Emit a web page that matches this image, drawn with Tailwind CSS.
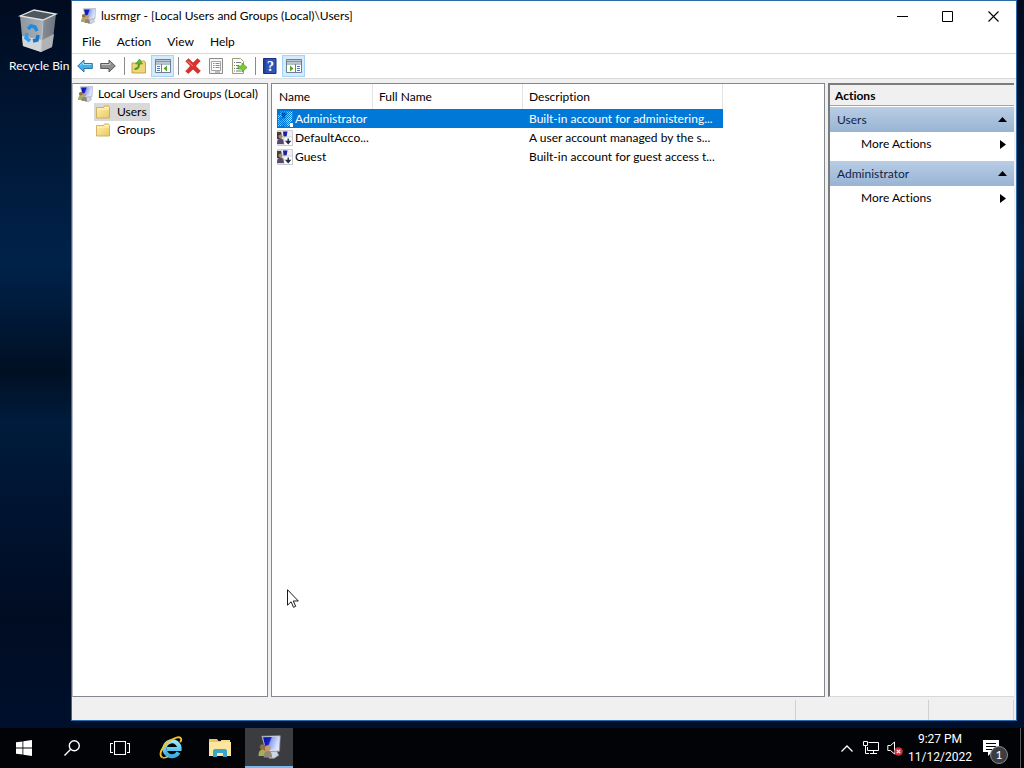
<!DOCTYPE html>
<html lang="en">
<head>
  <meta charset="UTF-8">
  <meta name="viewport" content="width=device-width, initial-scale=1.0">
  <title>lusrmgr - [Local Users and Groups (Local)\Users]</title>
  <script src="https://cdn.jsdelivr.net/npm/@tailwindcss/browser@4"></script>
</head>
<body class="h-screen flex flex-col overflow-hidden bg-[#00112b] font-['Lato','Noto_Sans',sans-serif] [font-variant-ligatures:none] text-xs text-black">

  <!-- shared icons -->
  <svg class="absolute size-0">
    <defs>
      <linearGradient id="folderFill" x1="0" y1="0" x2="1" y2="1">
        <stop offset="0" stop-color="#fdf0b4"/><stop offset="1" stop-color="#edc95f"/>
      </linearGradient>
      <linearGradient id="binFill" x1="0" y1="0" x2="1" y2="0">
        <stop offset="0" stop-color="#8f969e"/><stop offset=".6" stop-color="#aab0b6"/><stop offset=".62" stop-color="#868d96"/><stop offset="1" stop-color="#6d747e"/>
      </linearGradient>
      <linearGradient id="ieFill" x1="0" y1="0" x2="0" y2="1">
        <stop offset="0" stop-color="#9be8fb"/><stop offset="1" stop-color="#34aee6"/>
      </linearGradient>
      <linearGradient id="screen" x1="0" y1="0" x2="1" y2=".3">
        <stop offset="0" stop-color="#0a129c"/><stop offset=".45" stop-color="#1420c4"/><stop offset=".55" stop-color="#8fa3ee"/><stop offset="1" stop-color="#dbe4fd"/>
      </linearGradient>
      <symbol id="mmc" viewBox="0 0 16 16">
        <path d="m8 11 5-.5 1.500 3-3 2H8z" fill="#cfd5e2" stroke="#8b93a8" stroke-width=".5"/>
        <path d="M3.200.8 15.500.5 15 10.800 6 11z" fill="#dfe3ee" stroke="#8a91a8" stroke-width=".5"/>
        <path d="M4 1.500 14.700 1.200 14.200 9.500 6 9.800z" fill="url(#screen)"/>
        <circle cx="3.800" cy="8" r="1.900" fill="#8d7140"/>
        <path d="M1 14c0-3 1-4.400 2.800-4.400S6.600 11 6.600 14z" fill="#a9ad58"/>
        <circle cx="7.200" cy="8.800" r="1.900" fill="#c79873"/>
        <path d="M4.500 15c0-3 1-4.300 2.800-4.300S10 12 10 15z" fill="#8e8a76"/>
      </symbol>
      <symbol id="folder" viewBox="0 0 16 16">
        <path d="M1.500 3.500h7l1-1.500h4l1 1.500v10.500h-13z" fill="url(#folderFill)" stroke="#c9a24a" stroke-width=".8"/>
        <path d="M9.500 3.500h4.500" stroke="#fffbe2"/>
        <path d="M2 5.200h12" stroke="#fff7cf" stroke-width=".8"/>
      </symbol>
      <symbol id="userOff" viewBox="0 0 16 16">
        <path d="M.5.500h15v15H.5z" fill="#dcdde2" stroke="#b9bac2" stroke-width=".6"/>
        <path d="M5 1h10v8H6z" fill="#eef0f6"/>
        <path d="M6 1.500h4.500L9.500 6.500H6.500z" fill="#1b1fa0"/>
        <path d="M0 2h4l1 4-2 3H0z" fill="#4a3b38"/>
        <circle cx="3.500" cy="6.500" r="2" fill="#a98a62"/>
        <path d="M0 14c0-4 1.500-5.500 3.500-5.500S7 10 7 14z" fill="#57496e"/>
        <path d="M7 7h8.500v8.500H7z" fill="#fff" stroke="#b4b6be" stroke-width=".6"/>
        <path d="M11.200 8.500v4M9.500 11.500l1.700 2 1.700-2z" fill="#222b3e" stroke="#222b3e" stroke-width="1.400"/>
      </symbol>
    </defs>
  </svg>

  <main class="flex flex-1 min-h-0 pr-[7px] pb-[7px] bg-[linear-gradient(180deg,#000b20_0%,#001531_15%,#00224a_36%,#001024_51%,#001c3c_58%,#001533_68%,#000c22_85%,#00102c_100%)]">
    <div class="w-[71px] shrink-0 pt-2">
      <button class="block pl-[9px] text-white text-left whitespace-nowrap">
        <svg class="ml-[9px] w-[42px] h-[48px]" viewBox="0 0 42 48">
          <path d="M2 8 16 2l22 4-4 33-11 5-18-6z" fill="url(#binFill)"/>
          <path d="M2 8 16 2l22 4-13 6z" fill="#50565e" stroke="#dfe3e6" stroke-width="1.300"/>
          <path d="m5 38-1-10 20 4-1 12z" fill="#d3d6d8"/>
          <path d="m23 44 1-12 12-6-2 13z" fill="#b0b3b6"/>
          <path d="M25 12 23 44" stroke="#c3c8cc"/>
          <path d="m10 21 3-3 4 1 2 4" fill="none" stroke="#1e8be0" stroke-width="3.500"/>
          <path d="m9 25-1 5 4 3" fill="none" stroke="#2f9cf0" stroke-width="3.500"/>
          <path d="m15 33 4-1 1-5" fill="none" stroke="#1477cc" stroke-width="3.500"/>
        </svg>
        <span class="block leading-5">Recycle Bin</span>
      </button>
    </div>

    <section class="flex flex-col flex-1 min-w-0 bg-[#f0f0f0] border border-[#2b6cab]">
      <!-- title bar -->
      <header class="flex items-center h-[30px] bg-white pl-2">
        <svg class="w-4 h-4 mr-[5px]"><use href="#mmc"/></svg>
        <h1 class="flex-1 truncate">lusrmgr - [Local Users and Groups (Local)\Users]</h1>
        <button aria-label="Minimize" class="w-[46px] h-full grid place-items-center">
          <svg class="w-[11px] h-[11px]" viewBox="0 0 11 11"><path d="M0 5.500h11" stroke="#000"/></svg>
        </button>
        <button aria-label="Maximize" class="w-[45px] h-full grid place-items-center">
          <svg class="w-[11px] h-[11px]" viewBox="0 0 11 11"><path d="M.5.5h10v10H.5z" fill="none" stroke="#000"/></svg>
        </button>
        <button aria-label="Close" class="w-[46px] h-full grid place-items-center">
          <svg class="w-[11px] h-[11px]" viewBox="0 0 11 11"><path d="m.5.5 10 10m0-10-10 10" stroke="#000" stroke-width="1.100"/></svg>
        </button>
      </header>

      <nav class="flex items-center h-[22px] bg-white pl-[2px]">
        <button class="px-2">File</button>
        <button class="px-2">Action</button>
        <button class="px-2">View</button>
        <button class="px-2">Help</button>
      </nav>

      <!-- toolbar -->
      <div class="flex items-center h-[26px] bg-white border-y border-[#dadada] pl-[2px]">
        <button aria-label="Back" class="w-[23px] pl-[3px]">
          <svg class="w-4 h-4" viewBox="0 0 16 16"><path d="M.7 8 7 2v3.500h8.300v5H7V14z" fill="#3fb2ec" stroke="#22699e" stroke-width=".9"/><path d="M3 7.500 6.300 4.500V6.500h8" fill="none" stroke="#a4e0fb"/></svg>
        </button>
        <button aria-label="Forward" class="w-[23px] pl-[3px]">
          <svg class="w-4 h-4" viewBox="0 0 16 16"><path d="M15.300 8 9 2v3.500H.7v5H9V14z" fill="#8f8f8f" stroke="#4e4e4e" stroke-width=".9"/><path d="M1.500 6.500H10V4.500" fill="none" stroke="#c9c9c9"/></svg>
        </button>
        <span class="w-2 flex justify-center"><i class="w-px h-[18px] bg-[#8a8a8a]"></i></span>
        <button aria-label="Up one level" class="w-[23px] pl-[3px]">
          <svg class="w-4 h-4" viewBox="0 0 16 16"><path d="M1 5h7l1-2h4.500l1 2v10H1z" fill="#f0d678" stroke="#b99a45" stroke-width=".9"/><path d="M3.500 11c3 0 4.500-2 4.500-5" fill="none" stroke="#43a01f" stroke-width="2"/><path d="M4.500 6 8.500 1l3 5z" fill="#5bbb2d" stroke="#3c8c1d" stroke-width=".6"/></svg>
        </button>
        <button aria-label="Show/Hide Console Tree" aria-pressed="true" class="w-[23px] h-[22px] grid place-items-center bg-[#d5ebfb] border border-[#a5d3f5]">
          <svg class="w-4 h-4" viewBox="0 0 16 16"><path d="M.5 1.500h15v13H.5z" fill="#fff" stroke="#6d7f94"/><path d="M1 3.500h14" stroke="#7e93ad" stroke-width="2"/><path d="M1 6h14M6.500 6v8.500" stroke="#6d7f94"/><path d="M2 8.500h3M2 10.500h3M2 12.500h3" stroke="#4f79b0"/><path d="m8.500 10.500 3.500-3v6z" fill="#52a52a"/></svg>
        </button>
        <span class="w-2 flex justify-center"><i class="w-px h-[18px] bg-[#8a8a8a]"></i></span>
        <button aria-label="Delete" class="w-[23px] pl-[3px]">
          <svg class="w-4 h-4" viewBox="0 0 16 16"><path d="m.8 3.200 2.700-2.500L8 5l4.500-4.300 2.700 2.200L10.500 8l4.900 5-2.600 2.500L8 11l-4.700 4.500-2.600-2.300L5.500 8z" fill="#e0302c" stroke="#a81b1b" stroke-width=".6"/><path d="M2.500 3 8 8" stroke="#f58f86"/></svg>
        </button>
        <button aria-label="Properties" class="w-[23px] pl-[3px]">
          <svg class="w-4 h-4" viewBox="0 0 16 16"><path d="M1.500.5h13v15h-13z" fill="#f4f4f4" stroke="#8b8b8b"/><path d="M3.500 3.500h9v9h-9z" fill="#fff" stroke="#a5a5a5"/><path d="M5 5.500h1.500M7.500 5.500h4M5 7.500h1.500M7.500 7.500h4M5 9.500h1.500M7.500 9.500h4M7 14h5" stroke="#7e8aa0"/></svg>
        </button>
        <button aria-label="Export List" class="w-[23px] pl-[3px]">
          <svg class="w-4 h-4" viewBox="0 0 16 16"><path d="M1.500.5h8l3 3v12h-11z" fill="#fffdf0" stroke="#a49a7c"/><path d="M3 4.500h1M5 4.500h5M3 7.500h1M5 7.500h3M3 10.500h1M5 10.500h3M3 13h1M5 13h5" stroke="#6f7b8e"/><path d="M7 8h4V5l5 4.500-5 4.500v-3H7z" fill="#7ccc3c" stroke="#4d9420" stroke-width=".7"/></svg>
        </button>
        <span class="w-2 flex justify-center"><i class="w-px h-[18px] bg-[#8a8a8a]"></i></span>
        <button aria-label="Help" class="w-[23px] pl-[3px]">
          <svg class="w-4 h-4" viewBox="0 0 16 16"><path d="M1.500.5h12.500v15H1.500z" fill="#2f55b8" stroke="#1d2f78"/><path d="M3 1v14" stroke="#1d2f78"/><text x="8.500" y="13" font-size="14" font-weight="700" text-anchor="middle" fill="#fff" font-family="Liberation Serif, serif">?</text></svg>
        </button>
        <button aria-label="Show/Hide Action Pane" aria-pressed="true" class="w-[23px] h-[22px] grid place-items-center bg-[#d5ebfb] border border-[#a5d3f5]">
          <svg class="w-4 h-4" viewBox="0 0 16 16"><path d="M.5 1.500h15v13H.5z" fill="#fff" stroke="#6d7f94"/><path d="M1 3.500h14" stroke="#7e93ad" stroke-width="2"/><path d="M1 6h14M9.500 6v8.500" stroke="#6d7f94"/><path d="M11 8.500h3M11 10.500h3M11 12.500h3" stroke="#4f79b0"/><path d="m7.500 10.500-3.500-3v6z" fill="#52a52a"/></svg>
        </button>
      </div>

      <div class="flex flex-1 min-h-0 pt-1 pr-[2px]">
        <!-- console tree -->
        <ul class="w-[196px] shrink-0 bg-white border border-[#828790] border-l-[#b8bcc4] pt-[1px] leading-[18px] whitespace-nowrap">
          <li>
            <div class="flex items-center h-[18px] pl-1"><svg class="w-4 h-4 mr-[3px] shrink-0"><use href="#mmc"/></svg><span class="px-[2px]">Local Users and Groups (Local)</span></div>
            <ul class="pl-[21px]">
              <li class="flex"><button class="flex items-center h-[18px] pl-[1px] pr-px bg-[#d9d9d9]"><svg class="w-4 h-4 mr-1 shrink-0"><use href="#folder"/></svg><span class="px-[2px]">Users</span></button></li>
              <li class="flex"><button class="flex items-center h-[18px] pl-[1px] pr-px"><svg class="w-4 h-4 mr-1 shrink-0"><use href="#folder"/></svg><span class="px-[2px]">Groups</span></button></li>
            </ul>
          </li>
        </ul>

        <!-- user list -->
        <div class="flex-1 min-w-0 ml-[3px] bg-white border border-[#828790]">
          <table class="table-fixed w-[451px] border-separate border-spacing-0 text-left">
            <colgroup><col class="w-[101px]"><col class="w-[150px]"><col class="w-[200px]"></colgroup>
            <thead>
              <tr class="h-[25px]">
                <th class="font-normal p-0 pl-[7px] border-r border-[#e5e5e5]">Name</th>
                <th class="font-normal p-0 pl-[6px] border-r border-[#e5e5e5]">Full Name</th>
                <th class="font-normal p-0 pl-[6px] border-r border-[#e5e5e5]">Description</th>
              </tr>
            </thead>
            <tbody class="leading-[19px]">
              <tr class="text-white">
                <td class="p-0 pl-[5px]"><div class="flex items-center h-[19px] bg-[#0078d7]">
                  <svg class="w-4 h-4 mr-[2px] shrink-0" viewBox="0 0 16 16">
                    <defs><pattern id="dither" width="2" height="2" patternUnits="userSpaceOnUse"><path d="M0 0h1v1H0zM1 1h1v1H1z" fill="#0078d7"/></pattern></defs>
                    <path d="M3 1h12v10h-2v4H1V4h2z" fill="#b9c9e6"/><use href="#mmc"/><path d="M0 0h16v16H0z" fill="url(#dither)"/><path d="M13 12h3v4h-3z" fill="#fff"/>
                  </svg><span class="whitespace-nowrap">Administrator</span></div></td>
                <td class="p-0 bg-[#0078d7]"></td>
                <td class="p-0 pl-[6px] bg-[#0078d7] whitespace-nowrap">Built-in account for administering...</td>
              </tr>
              <tr>
                <td class="p-0 pl-[5px]"><div class="flex items-center h-[19px]"><svg class="w-4 h-4 mr-[2px] shrink-0"><use href="#userOff"/></svg><span class="whitespace-nowrap">DefaultAcco...</span></div></td>
                <td class="p-0"></td>
                <td class="p-0 pl-[6px] whitespace-nowrap">A user account managed by the s...</td>
              </tr>
              <tr>
                <td class="p-0 pl-[5px]"><div class="flex items-center h-[19px]"><svg class="w-4 h-4 mr-[2px] shrink-0"><use href="#userOff"/></svg><span class="whitespace-nowrap">Guest</span></div></td>
                <td class="p-0"></td>
                <td class="p-0 pl-[6px] whitespace-nowrap">Built-in account for guest access t...</td>
              </tr>
            </tbody>
          </table>
        </div>

        <!-- actions pane -->
        <aside class="w-[186px] shrink-0 ml-[3px] bg-white border-t-2 border-l-2 border-b border-[#7b7b7b] border-b-[#d8d8d8]">
          <h2 class="h-[21px] leading-[21px] pl-[5px] bg-[#f0f0f0] border-b border-[#a9a49c] font-bold">Actions</h2>
          <button class="flex items-center justify-between w-full h-[25px] mt-px px-[7px] bg-linear-to-b from-[#b9cde5] to-[#98b4d3] text-[#10244a]">Users
            <svg class="w-[9px] h-[5px]" viewBox="0 0 9 5"><path d="M0 5 4.500 0 9 5z"/></svg></button>
          <button class="flex items-center justify-between w-full h-6 pl-[31px] pr-2">More Actions
            <svg class="w-[6px] h-[9px]" viewBox="0 0 6 9"><path d="m0 0 6 4.500L0 9z"/></svg></button>
          <button class="flex items-center justify-between w-full h-[25px] mt-[5px] px-[7px] bg-linear-to-b from-[#b9cde5] to-[#98b4d3] text-[#10244a]">Administrator
            <svg class="w-[9px] h-[5px]" viewBox="0 0 9 5"><path d="M0 5 4.500 0 9 5z"/></svg></button>
          <button class="flex items-center justify-between w-full h-6 pl-[31px] pr-2">More Actions
            <svg class="w-[6px] h-[9px]" viewBox="0 0 6 9"><path d="m0 0 6 4.500L0 9z"/></svg></button>
        </aside>
      </div>

      <!-- status bar -->
      <footer class="flex h-[23px] pt-[3px] pr-[2px]">
        <span class="flex-1 border-r border-[#d0d0d0]"></span>
        <span class="w-[133px] border-r border-[#d0d0d0]"></span>
        <span class="w-[85px] border-r border-[#d0d0d0]"></span>
      </footer>
    </section>
  </main>

  <!-- taskbar -->
  <footer class="flex items-stretch h-10 shrink-0 bg-[#020306] text-white">
    <button aria-label="Start" class="w-12 grid place-items-center">
      <svg class="w-4 h-4" viewBox="0 0 16 16" fill="#fff"><path d="M0 2.300 6.500 1.400v6.200H0zM7.300 1.300 16 0v7.600H7.300zM0 8.400h6.500v6.200L0 13.700zM7.300 8.400H16V16l-8.700-1.300z"/></svg>
    </button>
    <button aria-label="Search" class="w-12 grid place-items-center">
      <svg class="w-4 h-4" viewBox="0 0 16 16" fill="none" stroke="#fff" stroke-width="1.400"><circle cx="10.300" cy="5.700" r="5"/><path d="M6.700 9.300.5 15.500"/></svg>
    </button>
    <button aria-label="Task View" class="w-12 grid place-items-center mr-[3px]">
      <svg class="w-5 h-4" viewBox="0 0 20 16" fill="none" stroke="#fff"><path d="M4.500 1.500h11v13h-11zM3 3.500H.5v9H3M17 3.500h2.500v9H17" stroke-width="1.100"/></svg>
    </button>
    <button aria-label="Internet Explorer" class="w-12 mr-px grid place-items-center">
      <svg class="w-6 h-6" viewBox="0 0 24 24" fill="none">
        <path d="M19.500 16.500a7.500 7.500 0 1 1 1-3.500H8" stroke="url(#ieFill)" stroke-width="4.200"/>
        <path d="M3.500 21.500C-1 19.500 3 10.500 9 6c6-4.500 12-6 13-3.500.4 1 .1 2.300-.7 3.700" stroke="#f6c02c" stroke-width="1.900"/>
        <path d="M3.500 21.500c1.500.6 3.500 0 5.500-1.200" stroke="#f6c02c" stroke-width="1.500"/>
      </svg>
    </button>
    <button aria-label="File Explorer" class="w-12 mr-px grid place-items-center">
      <svg class="w-6 h-6" viewBox="0 0 24 24"><path d="M1 3h8l1.500 2H22v15H1z" fill="#e9c45f"/><path d="M13 4h9v4h-9z" fill="#f6dc8c"/><path d="M1 6h22v14H1z" fill="#fbe69e"/><path d="M5 21v-6.500l1.500-1.500h11l1.500 1.500V21h-4v-4H9v4z" fill="#3aa5c9"/></svg>
    </button>
    <button aria-label="lusrmgr" class="w-12 pr-px grid place-items-center bg-[#3a3c3f] border-b-2 border-[#76b9ed]">
      <svg class="w-6 h-6"><use href="#mmc"/></svg>
    </button>

    <div class="flex items-center ml-auto">
      <button aria-label="Show hidden icons" class="w-6 grid place-items-center">
        <svg class="w-3 h-[7px]" viewBox="0 0 12 7"><path d="m.5 6.500 5.500-5.500 5.500 5.500" fill="none" stroke="#fff" stroke-width="1.300"/></svg>
      </button>
      <button aria-label="Network" class="w-6 grid place-items-center">
        <svg class="w-4 h-4" viewBox="0 0 16 16" fill="none" stroke="#fff"><path d="M5.500 2.500h10v8h-11V7M10.500 11v2.500M7 13.500h7"/><path d="M.5 1.500h4v4h-4zM2.500 6v7.500H6"/></svg>
      </button>
      <button aria-label="Volume" class="w-6 grid place-items-center">
        <svg class="w-4 h-4" viewBox="0 0 16 16" fill="none" stroke="#fff"><path d="M.8 5.500h2.700L7.500 2v12l-4-3.500H.8z"/><circle cx="11.500" cy="11.500" r="4.300" fill="#d22f3c" stroke="none"/><path d="m9.800 9.800 3.400 3.400m0-3.400-3.400 3.400" stroke-width="1.200"/></svg>
      </button>
      <time class="w-[66px] text-center leading-[18px] font-['Roboto','Noto_Sans',sans-serif]">9:27 PM<br>11/12/2022</time>
      <button aria-label="Notifications" class="relative w-[47px] h-full pl-[10px] flex items-center">
        <svg class="w-4 h-4" viewBox="0 0 16 16"><path d="M0 0h16v12H9l-4 4v-4H0z" fill="#fff"/><path d="M3 3.500h10M3 6.500h10M3 9.500h6" stroke="#000"/></svg>
        <span class="absolute left-[17px] bottom-1 size-[18px] rounded-full bg-[#3b3d40] border border-[#8c8c8c] leading-4 text-center">1</span>
      </button>
      <span class="w-1 h-full border-l border-[#5a5a5a]"></span>
    </div>
  </footer>

  <!-- mouse pointer -->
  <svg class="absolute left-[287px] top-[589px] w-3 h-[19px]" viewBox="0 0 12 19"><path d="M.5.7v15.500l3.600-3.400 2.400 5.500 2.200-1-2.400-5.300h5z" fill="#fff" stroke="#000" stroke-width=".9"/></svg>
</body>
</html>
